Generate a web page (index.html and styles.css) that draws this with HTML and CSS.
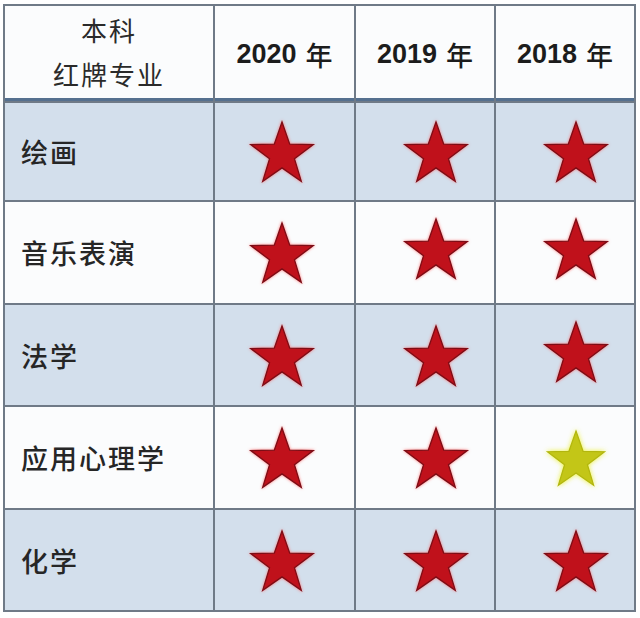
FILE: index.html
```html
<!DOCTYPE html>
<html lang="zh-CN">
<head>
<meta charset="utf-8">
<title>本科红牌专业</title>
<link rel="stylesheet" href="styles.css">
</head>
<body>
<svg width="0" height="0" class="defs" aria-hidden="true">
  <defs>
    <polygon id="star" points="0,-50 11.76,-16.18 47.55,-15.45 19.02,6.18 29.39,40.45 0,20 -29.39,40.45 -19.02,6.18 -47.55,-15.45 -11.76,-16.18"/>
  </defs>
</svg>
<div class="table">
  <div class="cell head first"><span>本科</span><span>红牌专业</span></div>
  <div class="cell head year">2020<span class="nian">年</span></div>
  <div class="cell head year">2019<span class="nian">年</span></div>
  <div class="cell head year">2018<span class="nian">年</span></div>

  <div class="cell name blue">绘画</div>
  <div class="cell star c2 blue"><svg class="red" viewBox="-50 -53 100 96"><use href="#star"/></svg></div>
  <div class="cell star c3 blue"><svg class="red" viewBox="-50 -53 100 96"><use href="#star"/></svg></div>
  <div class="cell star c4 blue"><svg class="red" viewBox="-50 -53 100 96"><use href="#star"/></svg></div>

  <div class="cell name">音乐表演</div>
  <div class="cell star c2"><svg class="red" viewBox="-50 -53 100 96"><use href="#star"/></svg></div>
  <div class="cell star c3 up"><svg class="red" viewBox="-50 -53 100 96"><use href="#star"/></svg></div>
  <div class="cell star c4 up"><svg class="red" viewBox="-50 -53 100 96"><use href="#star"/></svg></div>

  <div class="cell name blue">法学</div>
  <div class="cell star c2 blue"><svg class="red" viewBox="-50 -53 100 96"><use href="#star"/></svg></div>
  <div class="cell star c3 blue"><svg class="red" viewBox="-50 -53 100 96"><use href="#star"/></svg></div>
  <div class="cell star c4 blue up"><svg class="red" viewBox="-50 -53 100 96"><use href="#star"/></svg></div>

  <div class="cell name">应用心理学</div>
  <div class="cell star c2"><svg class="red" viewBox="-50 -53 100 96"><use href="#star"/></svg></div>
  <div class="cell star c3"><svg class="red" viewBox="-50 -53 100 96"><use href="#star"/></svg></div>
  <div class="cell star c4"><svg class="yellow" viewBox="-50 -53 100 96"><use href="#star"/></svg></div>

  <div class="cell name blue">化学</div>
  <div class="cell star c2 blue"><svg class="red" viewBox="-50 -53 100 96"><use href="#star"/></svg></div>
  <div class="cell star c3 blue"><svg class="red" viewBox="-50 -53 100 96"><use href="#star"/></svg></div>
  <div class="cell star c4 blue"><svg class="red" viewBox="-50 -53 100 96"><use href="#star"/></svg></div>
</div>
</body>
</html>
```

FILE: styles.css
```css
html, body {
  margin: 0;
  padding: 0;
  background: #ffffff;
}

.defs {
  position: absolute;
  width: 0;
  height: 0;
}

.table {
  margin: 4px 0 0 3px;
  width: 633px;
  display: grid;
  grid-template-columns: 208px 139px 138px 138px;
  grid-template-rows: 95px 97px 101px 100px 101px 100px;
  gap: 2px;
  border: 2px solid #6f7a87;
  background: #6f7a87;
  box-sizing: border-box;
  font-family: "Noto Sans CJK SC", "Liberation Sans", sans-serif;
  color: #222222;
}

.cell {
  background: #fbfcfd;
  display: flex;
  align-items: center;
  box-sizing: border-box;
}

.cell.blue {
  background: #d3dfec;
}

.head {
  border-bottom: 3px solid #55708f;
  justify-content: center;
}

.head.first {
  flex-direction: column;
  font-size: 26px;
  line-height: 44px;
  letter-spacing: 2px;
  color: #2a2a2a;
}

.head.year {
  font-family: "Liberation Sans", "Noto Sans CJK SC", sans-serif;
  font-weight: 700;
  font-size: 27px;
  color: #1c1c1c;
  padding-top: 4px;
}

.head.year .nian {
  font-family: "Noto Sans CJK SC", sans-serif;
  font-weight: 500;
  margin-left: 9px;
}

.name {
  padding-left: 16px;
  font-size: 27px;
  letter-spacing: 2px;
  font-weight: 500;
  color: #262626;
}

.star {
  justify-content: center;
}

.star.c2 {
  padding-right: 6px;
}

.star.c3,
.star.c4 {
  padding-left: 22px;
}

.star.up svg {
  margin-bottom: 8px;
}

.star svg {
  width: 66px;
  height: 63px;
  overflow: visible;
}

.star svg.red {
  fill: #c0111b;
  stroke: #7d0d16;
  stroke-width: 2;
  stroke-linejoin: miter;
  filter: drop-shadow(0 0 1.5px rgba(255, 110, 110, 0.9));
}

.star svg.yellow {
  width: 60px;
  height: 58px;
  fill: #c3c617;
  stroke: #b2b60e;
  stroke-width: 2;
  filter: drop-shadow(0 0 2.5px rgba(235, 240, 40, 0.95));
}
```
